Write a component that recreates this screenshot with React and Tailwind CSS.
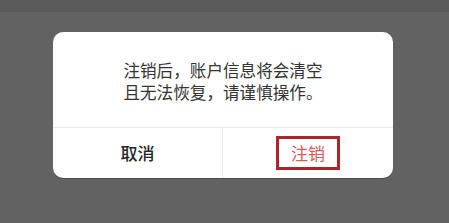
export default function App() {
  return (
    <div
      className="w-[449px] h-[223px] bg-[#626262] flex flex-col overflow-hidden"
      style={{ fontFamily: '"Noto Sans CJK SC", "Noto Sans", sans-serif' }}
    >
      <div className="h-[12px] bg-[#5a5a5a] shrink-0" />
      <div className="mt-[20px] ml-[53px] w-[340px] h-[146px] bg-white rounded-[10px] flex flex-col shadow-[0_1px_0_#4a4a4a]">
        <div className="h-[95px] flex flex-col items-center justify-center pt-[2px] text-[16.6px] leading-[22px] text-[#333333]">
          <div>注销后，账户信息将会清空</div>
          <div>且无法恢复，请谨慎操作。</div>
        </div>
        <div className="h-px bg-[#ebebeb]" />
        <div className="flex flex-1">
          <div className="w-[169px] flex items-center justify-center text-[17px] font-medium text-[#262626]">
            取消
          </div>
          <div className="w-px bg-[#ebebeb]" />
          <div className="flex-1 flex items-center justify-center">
            <div className="w-[64px] h-[34px] border-[3px] border-[#b3222a] flex items-center justify-center text-[17px] text-[#d85a5a]">
              注销
            </div>
          </div>
        </div>
      </div>
    </div>
  );
}
